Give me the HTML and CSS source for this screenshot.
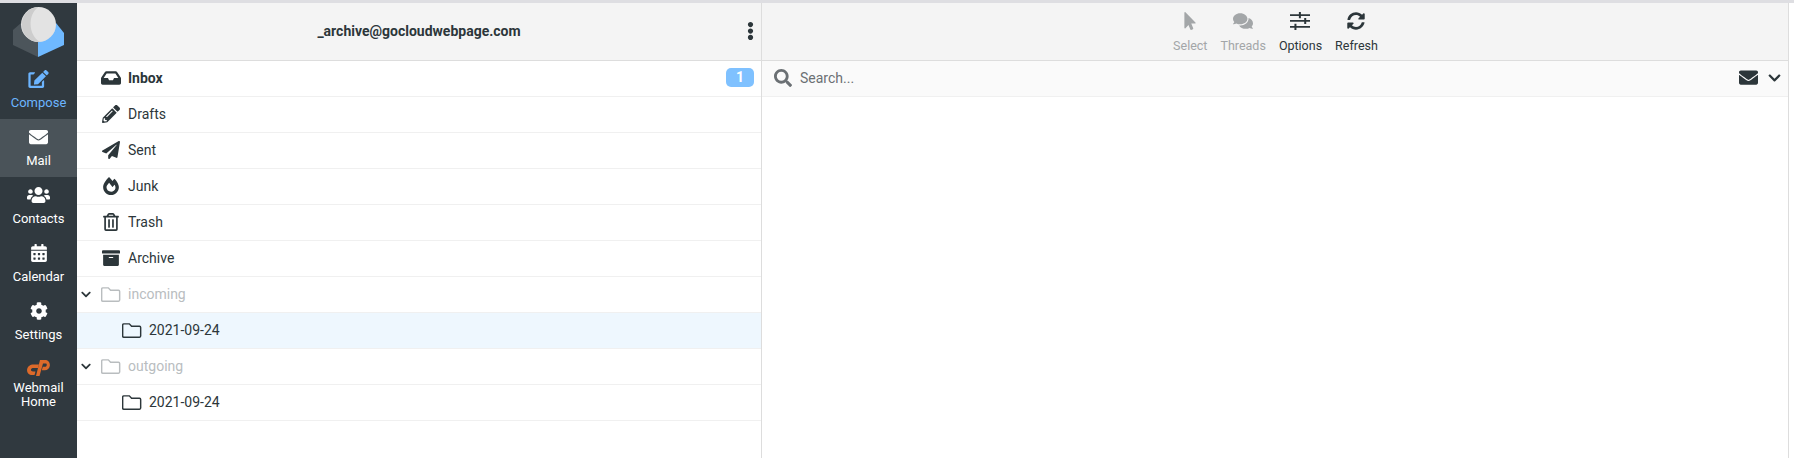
FILE: index.html
```html
<!DOCTYPE html>
<html lang="en">
<head>
  <meta charset="UTF-8" />
  <title>Roundcube Webmail</title>
  <link rel="stylesheet" href="styles.css">
</head>
<body>
  <div class="app">
    <!-- Left menu -->
    <nav class="menu">
      <div class="logo">
        <svg viewBox="0 0 77 58" width="77" height="58" aria-hidden="true">
          <path d="M21 20 L13 27 V42 L38 54 V39z" fill="#4c555b"/>
          <path d="M56 20 L64 30 V42 L38 54 V39z" fill="#6fb9ff"/>
          <circle cx="38.5" cy="21.500" r="17.500" fill="#e3e3e3"/>
          <path d="M38.500 4 A17.500 17.500 0 0 0 40 39 C28 32 27.500 11 38.500 4z" fill="#cdcdcd"/>
        </svg>
      </div>
      <a class="menu-item compose">
        <svg class="menu-icon icon-compose" viewBox="0 0 576 512"><path d="M402.6 83.2l90.2 90.2c3.8 3.8 3.8 10 0 13.8L274.4 405.6l-92.8 10.3c-12.4 1.4-22.9-9.1-21.5-21.5l10.3-92.8L388.8 83.2c3.8-3.8 10-3.800 13.800 0zm162-22.900l-48.800-48.800c-15.200-15.200-39.900-15.200-55.200 0l-35.400 35.400c-3.800 3.800-3.800 10 0 13.800l90.200 90.200c3.800 3.800 10 3.800 13.800 0l35.400-35.400c15.200-15.300 15.200-40 0-55.200zM384 346.200V448H64V128h73.100c3.200 0 6.200-1.300 8.500-3.500l40-40c7.600-7.600 2.200-20.500-8.500-20.500H48C21.500 64 0 85.500 0 112v352c0 26.500 21.500 48 48 48h352c26.500 0 48-21.500 48-48V306.200c0-10.700-12.900-16-20.500-8.500l-40 40c-2.200 2.300-3.500 5.300-3.500 8.500z"/></svg>
        <span>Compose</span>
      </a>
      <a class="menu-item selected">
        <svg class="menu-icon icon-mail" viewBox="0 64 512 384"><path d="M502.3 190.8c3.900-3.100 9.700-.2 9.700 4.700V400c0 26.500-21.500 48-48 48H48c-26.500 0-48-21.500-48-48V195.600c0-5 5.700-7.800 9.700-4.700 22.400 17.400 52.100 39.500 154.100 113.600 21.100 15.400 56.700 47.800 92.200 47.600 35.700.3 72-32.800 92.300-47.600 102-74.100 131.600-96.300 154-113.700zM256 320c23.200.4 56.600-29.200 73.400-41.400 132.700-96.300 142.800-104.700 173.400-128.700 5.800-4.500 9.200-11.500 9.200-18.900v-19c0-26.500-21.500-48-48-48H48C21.500 64 0 85.500 0 112v19c0 7.400 3.400 14.300 9.200 18.900 30.600 23.900 40.700 32.400 173.400 128.700 16.800 12.200 50.200 41.800 73.400 41.400z"/></svg>
        <span>Mail</span>
      </a>
      <a class="menu-item">
        <svg class="menu-icon icon-users" viewBox="0 32 640 448"><path d="M96 224c35.300 0 64-28.700 64-64s-28.700-64-64-64-64 28.700-64 64 28.700 64 64 64zm448 0c35.300 0 64-28.700 64-64s-28.700-64-64-64-64 28.700-64 64 28.700 64 64 64zm32 32h-64c-17.600 0-33.500 7.100-45.100 18.600 40.300 22.100 68.900 62 75.100 109.400h66c17.700 0 32-14.300 32-32v-32c0-35.300-28.700-64-64-64zm-256 0c61.900 0 112-50.100 112-112S381.900 32 320 32 208 82.100 208 144s50.100 112 112 112zm76.800 32h-8.300c-20.800 10-43.900 16-68.500 16s-47.600-6-68.500-16h-8.300C179.600 288 128 339.600 128 403.200V432c0 26.500 21.500 48 48 48h288c26.500 0 48-21.500 48-48v-28.800c0-63.600-51.600-115.200-115.200-115.200zm-223.700-13.400C161.500 263.100 145.600 256 128 256H64c-35.300 0-64 28.700-64 64v32c0 17.700 14.300 32 32 32h65.900c6.300-47.400 34.900-87.300 75.200-109.400z"/></svg>
        <span>Contacts</span>
      </a>
      <a class="menu-item">
        <svg class="menu-icon" viewBox="0 0 448 512"><path d="M0 464c0 26.500 21.500 48 48 48h352c26.500 0 48-21.500 48-48V192H0v272zm320-196c0-6.600 5.400-12 12-12h40c6.600 0 12 5.400 12 12v40c0 6.600-5.400 12-12 12h-40c-6.600 0-12-5.400-12-12v-40zm0 128c0-6.600 5.400-12 12-12h40c6.600 0 12 5.400 12 12v40c0 6.600-5.400 12-12 12h-40c-6.600 0-12-5.400-12-12v-40zM192 268c0-6.600 5.400-12 12-12h40c6.600 0 12 5.400 12 12v40c0 6.600-5.400 12-12 12h-40c-6.600 0-12-5.400-12-12v-40zm0 128c0-6.600 5.400-12 12-12h40c6.600 0 12 5.400 12 12v40c0 6.600-5.400 12-12 12h-40c-6.600 0-12-5.400-12-12v-40zM64 268c0-6.600 5.400-12 12-12h40c6.600 0 12 5.400 12 12v40c0 6.600-5.400 12-12 12H76c-6.600 0-12-5.400-12-12v-40zm0 128c0-6.600 5.400-12 12-12h40c6.600 0 12 5.400 12 12v40c0 6.600-5.400 12-12 12H76c-6.600 0-12-5.400-12-12v-40zM400 64h-48V16c0-8.800-7.200-16-16-16h-32c-8.800 0-16 7.200-16 16v48H160V16c0-8.800-7.200-16-16-16h-32c-8.800 0-16 7.200-16 16v48H48C21.500 64 0 85.500 0 112v48h448v-48c0-26.500-21.500-48-48-48z"/></svg>
        <span>Calendar</span>
      </a>
      <a class="menu-item">
        <svg class="menu-icon" viewBox="0 0 512 512"><path d="M487.400 315.700l-42.600-24.600c4.300-23.200 4.300-47 0-70.200l42.600-24.600c4.900-2.800 7.100-8.600 5.500-14-11.100-35.600-30-67.800-54.700-94.600-3.800-4.100-10-5.100-14.800-2.300L380.800 110c-17.900-15.400-38.500-27.300-60.800-35.100V25.800c0-5.600-3.900-10.500-9.400-11.700-36.700-8.200-74.300-7.800-109.200 0-5.500 1.200-9.400 6.100-9.400 11.700V75c-22.200 7.900-42.800 19.800-60.800 35.100L88.700 85.500c-4.900-2.800-11-1.900-14.800 2.300-24.700 26.700-43.600 58.900-54.700 94.600-1.700 5.400.6 11.200 5.500 14L67.300 221c-4.300 23.200-4.300 47 0 70.200l-42.600 24.600c-4.900 2.800-7.100 8.600-5.500 14 11.100 35.600 30 67.800 54.700 94.600 3.800 4.100 10 5.100 14.800 2.300l42.600-24.600c17.900 15.400 38.500 27.300 60.800 35.100v49.200c0 5.600 3.900 10.500 9.400 11.700 36.700 8.200 74.300 7.800 109.200 0 5.500-1.200 9.400-6.100 9.400-11.700v-49.200c22.200-7.900 42.800-19.800 60.800-35.100l42.600 24.600c4.900 2.800 11 1.900 14.800-2.300 24.700-26.700 43.600-58.900 54.700-94.600 1.500-5.500-.7-11.300-5.600-14.100zM256 336c-44.100 0-80-35.900-80-80s35.900-80 80-80 80 35.900 80 80-35.900 80-80 80z"/></svg>
        <span>Settings</span>
      </a>
      <a class="menu-item home">
        <svg class="cp-icon" viewBox="0 0 23 16" aria-hidden="true"><path d="M12 4.500H6.500C3 4.500.5 6.500.1 9.500-.3 12.800 2 15 5 15h2.500l1-3.500H6c-1.500 0-2.200-1-2-2 .2-1 1.200-1.500 2.300-1.500H11z"/><path d="M9 16h3.500L16 3.500h2.500c1 0 1.400.8 1.200 1.700-.2.9-.9 1.600-1.900 1.600h-2l-1 3.500h3c2.700 0 4.500-1.800 5-4.300C23.300 2.700 21.300 0 18.300 0H13z"/></svg>
        <span>Webmail<br>Home</span>
      </a>
    </nav>

    <!-- Folder list -->
    <section class="folders">
      <header class="bar folders-bar">
        <span class="account">_archive@gocloudwebpage.com</span>
        <svg class="dots" viewBox="0 0 192 512"><path d="M96 184c39.800 0 72 32.200 72 72s-32.200 72-72 72-72-32.200-72-72 32.200-72 72-72zM24 80c0 39.800 32.200 72 72 72s72-32.200 72-72S135.800 8 96 8 24 40.200 24 80zm0 352c0 39.800 32.200 72 72 72s72-32.200 72-72-32.200-72-72-72-72 32.200-72 72z"/></svg>
      </header>
      <ul class="folder-list">
        <li class="folder bold">
          <svg class="ficon" viewBox="0 0 576 512"><path d="M567.938 243.908L462.250 85.374A48.003 48.003 0 0 0 422.311 64H153.689a48 48 0 0 0-39.938 21.374L8.062 243.908A47.994 47.994 0 0 0 0 270.533V400c0 26.510 21.490 48 48 48h480c26.510 0 48-21.490 48-48V270.533a47.994 47.994 0 0 0-8.062-26.625zM162.252 128h251.497l85.333 128H376l-32 64H232l-32-64H76.918l85.334-128z"/></svg>
          <span class="fname">Inbox</span>
          <span class="badge">1</span>
        </li>
        <li class="folder">
          <svg class="ficon" viewBox="0 0 512 512"><path d="M497.900 142.100l-46.100 46.100c-4.700 4.700-12.300 4.700-17 0l-111-111c-4.700-4.700-4.700-12.300 0-17l46.100-46.100c18.700-18.700 49.100-18.700 67.900 0l60.100 60.100c18.800 18.700 18.800 49.100 0 67.900zM284.200 99.800L21.600 362.400.4 483.900c-2.900 16.400 11.400 30.600 27.800 27.800l121.500-21.300 262.600-262.600c4.700-4.700 4.700-12.300 0-17l-111-111c-4.800-4.700-12.400-4.700-17.100 0zM124.100 339.900c-5.500-5.500-5.500-14.300 0-19.800l154-154c5.500-5.500 14.300-5.500 19.800 0s5.500 14.300 0 19.800l-154 154c-5.500 5.500-14.300 5.500-19.800 0zM88 424h48v36.300l-64.500 11.300-31.100-31.100L51.700 376H88v48z"/></svg>
          <span class="fname">Drafts</span>
        </li>
        <li class="folder">
          <svg class="ficon" viewBox="0 0 512 512"><path d="M476 3.200L12.500 270.600c-18.100 10.400-15.800 35.600 2.200 43.200L121 358.400l287.300-253.200c5.500-4.900 13.300 2.600 8.600 8.300L176 407v80.500c0 23.600 28.500 32.900 42.500 15.800L282 426l124.600 52.200c14.200 6 30.400-2.900 33-18.200l72-432C515 7.800 493.300-6.800 476 3.200z"/></svg>
          <span class="fname">Sent</span>
        </li>
        <li class="folder">
          <svg class="ficon" viewBox="0 0 448 512"><path d="M323.560 51.200c-20.800 19.300-39.580 39.590-56.220 59.970C240.080 73.620 206.280 35.530 168 0 69.740 91.170 0 209.960 0 281.600 0 408.850 100.290 512 224 512s224-103.150 224-230.400c0-53.270-51.980-163.140-124.440-230.400zm-19.470 340.650C282.430 407.010 255.720 416 226.860 416 154.710 416 96 368.260 96 290.750c0-38.610 24.310-72.630 72.790-130.750 6.930 7.980 98.830 125.340 98.830 125.340l58.630-66.880c4.140 6.850 7.910 13.550 11.270 19.970 27.350 52.190 15.810 118.970-33.430 153.420z"/></svg>
          <span class="fname">Junk</span>
        </li>
        <li class="folder">
          <svg class="ficon" viewBox="0 0 448 512"><path d="M268 416h24a12 12 0 0 0 12-12V188a12 12 0 0 0-12-12h-24a12 12 0 0 0-12 12v216a12 12 0 0 0 12 12zM432 80h-82.410l-34-56.700A48 48 0 0 0 274.410 0H173.590a48 48 0 0 0-41.160 23.300L98.410 80H16A16 16 0 0 0 0 96v16a16 16 0 0 0 16 16h16v336a48 48 0 0 0 48 48h288a48 48 0 0 0 48-48V128h16a16 16 0 0 0 16-16V96a16 16 0 0 0-16-16zM171.840 50.910A6 6 0 0 1 177 48h94a6 6 0 0 1 5.150 2.910L293.610 80H154.390zM368 464H80V128h288zm-212-48h24a12 12 0 0 0 12-12V188a12 12 0 0 0-12-12h-24a12 12 0 0 0-12 12v216a12 12 0 0 0 12 12z"/></svg>
          <span class="fname">Trash</span>
        </li>
        <li class="folder">
          <svg class="ficon" viewBox="0 0 512 512"><path d="M32 448c0 17.700 14.300 32 32 32h384c17.700 0 32-14.300 32-32V160H32v288zm160-212c0-6.600 5.400-12 12-12h104c6.600 0 12 5.400 12 12v8c0 6.600-5.400 12-12 12H204c-6.600 0-12-5.400-12-12v-8zM480 32H32C14.300 32 0 46.300 0 64v48c0 8.800 7.200 16 16 16h480c8.800 0 16-7.200 16-16V64c0-17.700-14.300-32-32-32z"/></svg>
          <span class="fname">Archive</span>
        </li>
        <li class="folder muted">
          <svg class="toggle" viewBox="0 0 448 512"><path d="M207.029 381.476L12.686 187.132c-9.373-9.373-9.373-24.569 0-33.941l22.667-22.667c9.357-9.357 24.522-9.375 33.901-.04L224 284.505l154.745-154.021c9.379-9.335 24.544-9.317 33.901.04l22.667 22.667c9.373 9.373 9.373 24.569 0 33.941L240.971 381.476c-9.373 9.372-24.569 9.372-33.942 0z"/></svg>
          <svg class="ficon outline" viewBox="0 0 18 16"><path d="M1.600 2.500h5l2 2.200h7.200c.6 0 1 .4 1 1v7.800c0 .6-.4 1-1 1H1.600c-.6 0-1-.4-1-1V3.500c0-.6.4-1 1-1z"/></svg>
          <span class="fname">incoming</span>
        </li>
        <li class="folder child current">
          <svg class="ficon outline" viewBox="0 0 18 16"><path d="M1.600 2.500h5l2 2.200h7.200c.6 0 1 .4 1 1v7.800c0 .6-.4 1-1 1H1.600c-.6 0-1-.4-1-1V3.500c0-.6.4-1 1-1z"/></svg>
          <span class="fname">2021-09-24</span>
        </li>
        <li class="folder muted">
          <svg class="toggle" viewBox="0 0 448 512"><path d="M207.029 381.476L12.686 187.132c-9.373-9.373-9.373-24.569 0-33.941l22.667-22.667c9.357-9.357 24.522-9.375 33.901-.04L224 284.505l154.745-154.021c9.379-9.335 24.544-9.317 33.901.04l22.667 22.667c9.373 9.373 9.373 24.569 0 33.941L240.971 381.476c-9.373 9.372-24.569 9.372-33.942 0z"/></svg>
          <svg class="ficon outline" viewBox="0 0 18 16"><path d="M1.600 2.500h5l2 2.200h7.200c.6 0 1 .4 1 1v7.800c0 .6-.4 1-1 1H1.600c-.6 0-1-.4-1-1V3.500c0-.6.4-1 1-1z"/></svg>
          <span class="fname">outgoing</span>
        </li>
        <li class="folder child">
          <svg class="ficon outline" viewBox="0 0 18 16"><path d="M1.600 2.500h5l2 2.200h7.200c.6 0 1 .4 1 1v7.800c0 .6-.4 1-1 1H1.600c-.6 0-1-.4-1-1V3.500c0-.6.4-1 1-1z"/></svg>
          <span class="fname">2021-09-24</span>
        </li>
      </ul>
    </section>

    <!-- Message list -->
    <section class="messages">
      <header class="bar toolbar">
        <a class="tool disabled tool-select">
          <svg class="tool-icon" viewBox="0 0 320 512"><path d="M302.189 329.126H196.105l55.831 135.993c3.889 9.428-.555 19.999-9.444 23.999l-49.165 21.427c-9.165 4-19.443-.571-23.332-9.714l-53.053-129.136-86.664 89.138C18.729 472.710 0 463.554 0 447.977V18.299C0 1.899 19.921-6.096 30.277 5.443l284.412 292.542c11.472 11.179 3.007 31.141-12.500 31.141z"/></svg>
          <span>Select</span>
        </a>
        <a class="tool disabled">
          <svg class="tool-icon" viewBox="0 0 576 512"><path d="M416 192c0-88.400-93.100-160-208-160S0 103.600 0 192c0 34.300 14.100 65.900 38 92-13.400 30.200-35.500 54.200-35.800 54.500-2.200 2.300-2.800 5.700-1.500 8.700S4.800 352 8 352c36.600 0 66.900-12.300 88.700-25 32.200 15.700 70.300 25 111.300 25 114.900 0 208-71.600 208-160zm122 220c23.900-26 38-57.700 38-92 0-66.900-53.500-124.200-129.300-148.100.9 6.600 1.300 13.300 1.300 20.100 0 105.900-107.700 192-240 192-10.800 0-21.300-.8-31.700-1.900C207.800 439.600 281.800 480 368 480c41 0 79.100-9.200 111.300-25 21.800 12.700 52.100 25 88.700 25 3.200 0 6.100-1.900 7.300-4.800 1.300-2.900.7-6.300-1.500-8.700-.3-.3-22.400-24.200-35.800-54.500z"/></svg>
          <span>Threads</span>
        </a>
        <a class="tool">
          <svg class="tool-icon" viewBox="0 0 18 16"><path d="M0 2h18v1.500H0zM0 7.200h18v1.500H0zM0 12.500h18V14H0zM8 0h1.800v5.500H8zM12.800 5.200h1.800v5.500h-1.800zM4 10.500h1.800V16H4z"/></svg>
          <span>Options</span>
        </a>
        <a class="tool">
          <svg class="tool-icon" viewBox="0 0 512 512"><path d="M370.720 133.280C339.458 104.008 298.888 87.962 255.848 88c-77.458.068-144.328 53.178-162.791 126.850-1.344 5.363-6.122 9.150-11.651 9.150H24.103c-7.498 0-13.194-6.807-11.807-14.176C33.933 94.924 134.813 8 256 8c66.448 0 126.791 26.136 171.315 68.685L463.030 40.970C478.149 25.851 504 36.559 504 57.941V192c0 13.255-10.745 24-24 24H345.941c-21.382 0-32.090-25.851-16.971-40.971l41.750-41.749zM32 296h134.059c21.382 0 32.090 25.851 16.971 40.971l-41.750 41.750c31.262 29.273 71.835 45.319 114.876 45.280 77.418-.07 144.315-53.144 162.787-126.849 1.344-5.363 6.122-9.150 11.651-9.150h57.304c7.498 0 13.194 6.807 11.807 14.176C478.067 417.076 377.187 504 256 504c-66.448 0-126.791-26.136-171.315-68.685L48.970 471.030C33.851 486.149 8 475.441 8 454.059V320c0-13.255 10.745-24 24-24z"/></svg>
          <span>Refresh</span>
        </a>
      </header>
      <div class="searchbar">
        <svg class="search-icon" viewBox="0 0 512 512"><path d="M505 442.700L405.300 343c-4.500-4.500-10.600-7-17-7H372c27.600-35.300 44-79.700 44-128C416 93.100 322.900 0 208 0S0 93.100 0 208s93.100 208 208 208c48.300 0 92.700-16.400 128-44v16.300c0 6.400 2.500 12.500 7 17l99.700 99.700c9.400 9.400 24.600 9.400 33.900 0l28.300-28.300c9.400-9.400 9.400-24.600.1-34zM208 336c-70.700 0-128-57.200-128-128 0-70.700 57.200-128 128-128 70.700 0 128 57.200 128 128 0 70.700-57.200 128-128 128z"/></svg>
        <span class="search-text">Search...</span>
        <svg class="search-mail" viewBox="0 0 512 512"><path d="M502.300 190.800c3.900-3.100 9.700-.2 9.700 4.700V400c0 26.500-21.500 48-48 48H48c-26.500 0-48-21.500-48-48V195.600c0-5 5.700-7.800 9.700-4.700 22.400 17.400 52.100 39.500 154.100 113.600 21.100 15.400 56.700 47.800 92.200 47.600 35.700.3 72-32.800 92.300-47.600 102-74.100 131.600-96.300 154-113.700zM256 320c23.200.4 56.600-29.200 73.400-41.400 132.700-96.300 142.800-104.700 173.400-128.700 5.800-4.500 9.200-11.500 9.200-18.900v-19c0-26.500-21.500-48-48-48H48C21.500 64 0 85.500 0 112v19c0 7.400 3.400 14.300 9.200 18.900 30.600 23.900 40.700 32.400 173.400 128.700 16.800 12.200 50.200 41.800 73.400 41.400z"/></svg>
        <svg class="search-arrow" viewBox="0 0 448 512"><path d="M207.029 381.476L12.686 187.132c-9.373-9.373-9.373-24.569 0-33.941l22.667-22.667c9.357-9.357 24.522-9.375 33.901-.04L224 284.505l154.745-154.021c9.379-9.335 24.544-9.317 33.901.04l22.667 22.667c9.373 9.373 9.373 24.569 0 33.941L240.971 381.476c-9.373 9.372-24.569 9.372-33.942 0z"/></svg>
      </div>
    </section>

    <div class="content"></div>
  </div>
</body>
</html>
```

FILE: styles.css
```css
/* Reset and base */
* {
  box-sizing: border-box;
  margin: 0;
  padding: 0;
}
html, body {
  height: 100%;
  overflow: hidden;
}
body {
  background: #fff;
  color: #2c363a;
  font-family: Roboto, "Liberation Sans", sans-serif;
  font-size: 14px;
  border-top: 3px solid #dedee2;
}
svg {
  display: block;
  fill: currentColor;
}
.app {
  display: flex;
  height: 100%;
}

/* Left menu */
.menu {
  width: 77px;
  flex-shrink: 0;
  background: #30393f;
  color: #fff;
  font-size: 13px;
  text-align: center;
}
.logo {
  height: 58px;
}
.menu-item {
  display: flex;
  flex-direction: column;
  align-items: center;
  height: 58px;
  padding-top: 9px;
  line-height: 16px;
}
.menu-icon {
  width: 18px;
  height: 18px;
  margin-bottom: 7px;
}
.icon-compose {
  width: 21px;
}
.icon-mail {
  width: 19px;
}
.icon-users {
  width: 23px;
}
.menu-item.compose {
  color: #6cb5ff;
}
.menu-item.selected {
  background: #4a5359;
}
.cp-icon {
  width: 23px;
  height: 16px;
  margin-bottom: 5px;
  color: #dd6a2a;
}
.menu-item.home {
  line-height: 14px;
}

/* Header bars */
.bar {
  height: 58px;
  background: #f4f4f4;
  border-bottom: 1px solid #ddd;
}

/* Folder list */
.folders {
  width: 685px;
  flex-shrink: 0;
  border-right: 1px solid #ddd;
}
.folders-bar {
  display: flex;
  align-items: center;
  justify-content: center;
  padding-bottom: 2px;
  position: relative;
}
.account {
  font-weight: 700;
  font-size: 14px;
}
.dots {
  position: absolute;
  right: 7px;
  top: 18px;
  width: 7px;
  height: 20px;
}
.folder-list {
  list-style: none;
}
.folder {
  display: flex;
  align-items: center;
  height: 36px;
  padding-left: 24px;
  padding-bottom: 2px;
  border-bottom: 1px solid #f0f0f0;
  position: relative;
}
.ficon {
  width: 20px;
  height: 18px;
  margin-right: 7px;
  color: #2c363a;
}
.ficon.outline {
  fill: none;
  stroke: currentColor;
  stroke-width: 1.3;
}
.bold .fname {
  font-weight: 700;
}
.muted {
  color: #b9bdbf;
}
.muted .ficon {
  color: #b9bdbf;
}
.toggle {
  position: absolute;
  left: 4px;
  top: 12px;
  width: 10px;
  height: 11px;
  color: #2c363a;
}
.child {
  padding-left: 45px;
}
.current {
  background: #eef7fe;
}
.badge {
  margin-left: auto;
  margin-right: 7px;
  width: 28px;
  height: 19px;
  border-radius: 5px;
  background: #7fc1ff;
  color: #fff;
  font-size: 14px;
  font-weight: 700;
  line-height: 19px;
  text-align: center;
}

/* Message list */
.messages {
  width: 1027px;
  flex-shrink: 0;
  border-right: 1px solid #ddd;
}
.toolbar {
  display: flex;
  justify-content: center;
  gap: 13px;
  padding-top: 9px;
  padding-left: 1px;
  font-size: 12.500px;
}
.tool {
  display: flex;
  flex-direction: column;
  align-items: center;
  line-height: 16px;
}
.tool-icon {
  width: 20px;
  height: 18px;
  margin-bottom: 8px;
}
.tool-select .tool-icon {
  width: 12px;
}
.disabled {
  color: #a3a6a8;
}
.searchbar {
  display: flex;
  align-items: center;
  height: 36px;
  padding: 0 7px 2px 12px;
  background: #fafafa;
  border-bottom: 1px solid #f0f0f0;
}
.search-icon {
  width: 18px;
  height: 18px;
  color: #6b7074;
  margin-right: 8px;
}
.search-text {
  color: #6b7074;
}
.search-mail {
  width: 19px;
  height: 19px;
  margin-left: auto;
}
.search-arrow {
  width: 13px;
  height: 14px;
  margin-left: 10px;
}
.content {
  flex: 1;
}
```
